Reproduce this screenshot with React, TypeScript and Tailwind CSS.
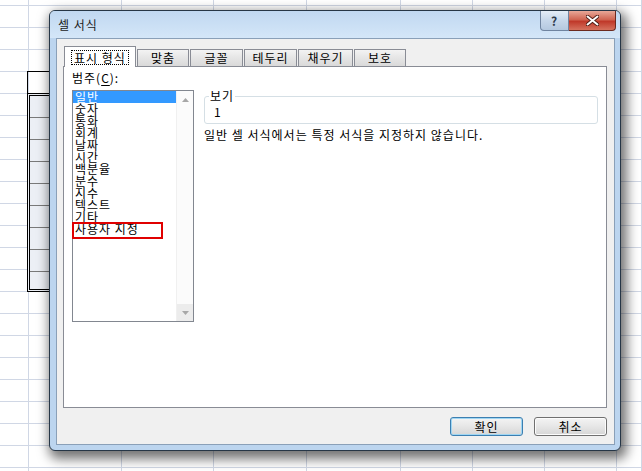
import { Fragment } from "react";

const gridLine = "border-[#d0d7e5]";
const colClasses = [
  "w-[29px]",
  "w-[93px]",
  "w-[92px]",
  "w-[93px]",
  "w-[94px]",
  "w-[72px]",
  "w-[72px]",
  "w-[72px]",
  "flex-1",
];

const categories = [
  "일반",
  "숫자",
  "통화",
  "회계",
  "날짜",
  "시간",
  "백분율",
  "분수",
  "지수",
  "텍스트",
  "기타",
  "사용자 지정",
];

const tabs = [
  { label: "맞춤", width: "w-[52px]" },
  { label: "글꼴", width: "w-[53px]" },
  { label: "테두리", width: "w-[53px]" },
  { label: "채우기", width: "w-[55px]" },
  { label: "보호", width: "w-[52px]" },
];

function GridRow({ first }: { first?: boolean }) {
  return (
    <div className={`flex shrink-0 border-b ${gridLine} ${first ? "h-[6px]" : "h-[22px]"}`}>
      {colClasses.map((c, i) => (
        <div key={i} className={`${c} shrink-0 border-r ${gridLine}`} />
      ))}
    </div>
  );
}

function Sheet() {
  return (
    <div className="absolute inset-0 flex flex-col bg-white">
      <GridRow first />
      {Array.from({ length: 22 }).map((_, i) => (
        <GridRow key={i} />
      ))}
      <div className="absolute left-[27px] top-[71px] h-[23px] w-[95px] border border-black" />
      <div className="absolute left-[27px] top-[93px] flex h-[199px] w-[95px] flex-col border-[3px] border-double border-black bg-[#eceff5]">
        {Array.from({ length: 9 }).map((_, i) => (
          <div key={i} className="h-[22px] shrink-0 border-b border-[#7a7a7a] last:border-b-0" />
        ))}
      </div>
    </div>
  );
}

function Triangle({ down }: { down?: boolean }) {
  return (
    <svg width="7" height="4" viewBox="0 0 7 4">
      <path d={down ? "M0 0h7L3.5 4z" : "M0 4h7L3.5 0z"} fill="#a7a7a7" />
    </svg>
  );
}

function CategoryList() {
  return (
    <div className="relative flex h-[232px] w-[122px] border border-[#828790] bg-white">
      <div className="flex w-[103px] flex-col">
        {categories.map((name, i) => (
          <div
            key={name}
            className={`h-[12px] whitespace-nowrap pl-[2px] leading-[12px] ${
              i === 0 ? "bg-[#3399ff] text-white" : "text-black"
            }`}>
            {name}
          </div>
        ))}
      </div>
      <div className="flex w-[17px] flex-col justify-between border-l border-[#f0f0f0] bg-[#fbfbfb]">
        <div className="flex h-[17px] items-center justify-center">
          <Triangle />
        </div>
        <div className="flex h-[17px] items-center justify-center bg-[#ececec]">
          <Triangle down />
        </div>
      </div>
      <div className="absolute -left-px top-[131px] h-[17px] w-[91px] border-2 border-[#e00000]" />
    </div>
  );
}

function DialogButton({ label, focused }: { label: string; focused?: boolean }) {
  return (
    <button
      type="button"
      className={`h-[19px] w-[73px] rounded-[3px] border bg-[linear-gradient(to_bottom,#f4f4f4,#e6e6e6_50%,#d6d6d6)] text-[12px] leading-[16px] tracking-[1px] text-black ${
        focused
          ? "border-[#3c7fb1] shadow-[inset_0_0_0_1px_#9fd6f3]"
          : "border-[#707070] shadow-[inset_0_0_0_1px_#fcfcfc]"
      }`}>
      {label}
    </button>
  );
}

function Dialog() {
  return (
    <div className="absolute left-[49px] top-[10px] flex h-[441px] w-[572px] flex-col rounded-[6px] border border-[#263646] bg-[#bcd5ef] px-[6px] pb-[5px] pr-[5px] tracking-[1px] shadow-[3px_5px_12px_3px_rgba(0,0,0,0.55)]">
      <div className="-mx-[6px] -mr-[5px] flex h-[27px] items-center rounded-t-[5px] bg-[linear-gradient(to_bottom,#c0d8f1,#d4e6f8)] pl-[8px] text-[12px] text-[#1b1b1b]">
        셀 서식
      </div>
      <div className="absolute right-[4px] top-0 flex h-[20px]">
        <div className="flex w-[29px] items-center justify-center rounded-bl-[4px] border border-t-0 border-[#6f84a0] bg-[linear-gradient(to_bottom,#e4edf7,#c6d7ea_50%,#b4c8df)] text-[12px] font-bold leading-none text-[#2d3a4a]">
          ?
        </div>
        <div className="flex w-[47px] items-center justify-center rounded-br-[4px] border border-l-0 border-t-0 border-[#6b2a20] bg-[linear-gradient(to_bottom,#e8a898,#d06552_45%,#c0392a_55%,#d5725e)]">
          <svg width="13" height="11" viewBox="0 0 13 11">
            <path d="M1.5 1.5l10 8M11.5 1.5l-10 8" stroke="#4a1a12" strokeWidth="3.6" strokeLinecap="round" />
            <path d="M1.5 1.5l10 8M11.5 1.5l-10 8" stroke="#ffffff" strokeWidth="2" strokeLinecap="round" />
          </svg>
        </div>
      </div>

      <div className="flex flex-1 flex-col border border-[#8aa0b8] bg-[#f0f0f0] pl-[6px] pr-[7px] pt-[7px]">
        <div className="relative z-10 flex h-[20px] items-end gap-px pl-px">
          <div className="-mb-px flex h-[21px] w-[72px] items-start justify-center border border-b-0 border-[#898c95] bg-white pt-[3px]">
            <span className="border border-dotted border-black px-[2px] leading-[13px]">표시 형식</span>
          </div>
          {tabs.map((t) => (
            <div
              key={t.label}
              className={`${t.width} flex h-[17px] items-center justify-center border border-b-0 border-[#898c95] bg-[linear-gradient(to_bottom,#f3f3f3,#e5e5e5_50%,#d9d9d9)] leading-[14px]`}>
              {t.label}
            </div>
          ))}
        </div>

        <div className="flex h-[342px] border border-[#898c95] bg-white pl-[8px] pr-[8px]">
          <div className="flex w-[122px] flex-col pt-[4px]">
            <div className="h-[14px] leading-[14px]">
              범주(<span className="underline underline-offset-2">C</span>):
            </div>
            <div className="mt-[5px]">
              <CategoryList />
            </div>
          </div>
          <div className="ml-[10px] flex flex-1 flex-col pt-[29px]">
            <div className="relative h-[28px] rounded-[3px] border border-[#d5dfe5] pl-[9px] pt-[8px] leading-[14px]">
              <span className="absolute -top-[8px] left-[4px] bg-white px-px leading-[14px]">보기</span>
              1
            </div>
            <div className="mt-[3px] leading-[16px]">일반 셀 서식에서는 특정 서식을 지정하지 않습니다.</div>
          </div>
        </div>

        <div className="mt-[9px] flex justify-end gap-[11px]">
          <DialogButton label="확인" focused />
          <DialogButton label="취소" />
        </div>
      </div>
    </div>
  );
}

export default function App() {
  return (
    <Fragment>
      <div className="relative h-[471px] w-[642px] overflow-hidden font-['Noto_Sans_CJK_KR','Noto_Sans',sans-serif] text-[12px] text-black">
        <Sheet />
        <Dialog />
      </div>
    </Fragment>
  );
}
